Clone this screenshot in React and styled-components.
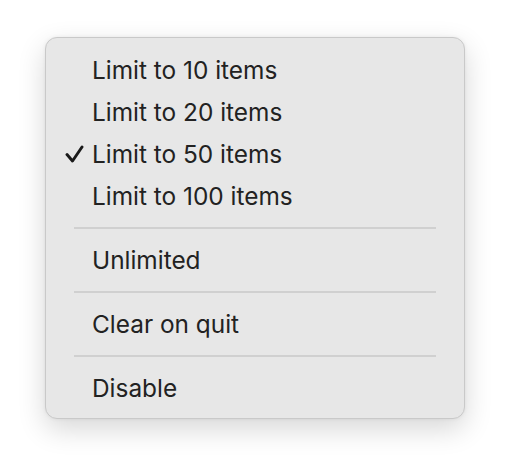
import React from 'react';
import styled, { createGlobalStyle } from 'styled-components';

const GlobalStyle = createGlobalStyle`
  html, body {
    margin: 0;
    padding: 0;
    background: #ffffff;
  }
`;

const Page = styled.div`
  width: 510px;
  height: 472px;
  padding: 37px 0 0 45px;
  box-sizing: border-box;
`;

const Menu = styled.div`
  width: 420px;
  box-sizing: border-box;
  padding: 11px 28px 9px 28px;
  background: #e7e7e7;
  border: 1px solid #c9c9c9;
  border-radius: 12px;
  box-shadow: 0 10px 28px rgba(0, 0, 0, 0.16), 0 0 4px rgba(0, 0, 0, 0.06);
  font-family: Inter, "Liberation Sans", sans-serif;
  color: #222222;
`;

const Item = styled.div`
  display: flex;
  align-items: center;
  height: 42px;
  font-size: 24.4px;
`;

const CheckSlot = styled.span`
  width: 20px;
  display: flex;
  align-items: center;
  justify-content: flex-start;
  margin-left: -9px;
  margin-right: 7px;
`;

const Separator = styled.div`
  height: 2px;
  background: #d0d0d0;
  margin: 10px 0 10px 0;
`;

function Check() {
  return (
    <svg width="19" height="19" viewBox="0 0 19 19">
      <path d="M2 9.5 L7.5 16 L17 2" fill="none" stroke="#1a1a1a" strokeWidth="2.9" strokeLinecap="round" strokeLinejoin="round" />
    </svg>
  );
}

function MenuItem({ label, checked }) {
  return (
    <Item>
      <CheckSlot>{checked ? <Check /> : null}</CheckSlot>
      {label}
    </Item>
  );
}

export default function App() {
  return (
    <Page>
      <GlobalStyle />
      <Menu>
        <MenuItem label="Limit to 10 items" />
        <MenuItem label="Limit to 20 items" />
        <MenuItem label="Limit to 50 items" checked />
        <MenuItem label="Limit to 100 items" />
        <Separator />
        <MenuItem label="Unlimited" />
        <Separator />
        <MenuItem label="Clear on quit" />
        <Separator />
        <MenuItem label="Disable" />
      </Menu>
    </Page>
  );
}
